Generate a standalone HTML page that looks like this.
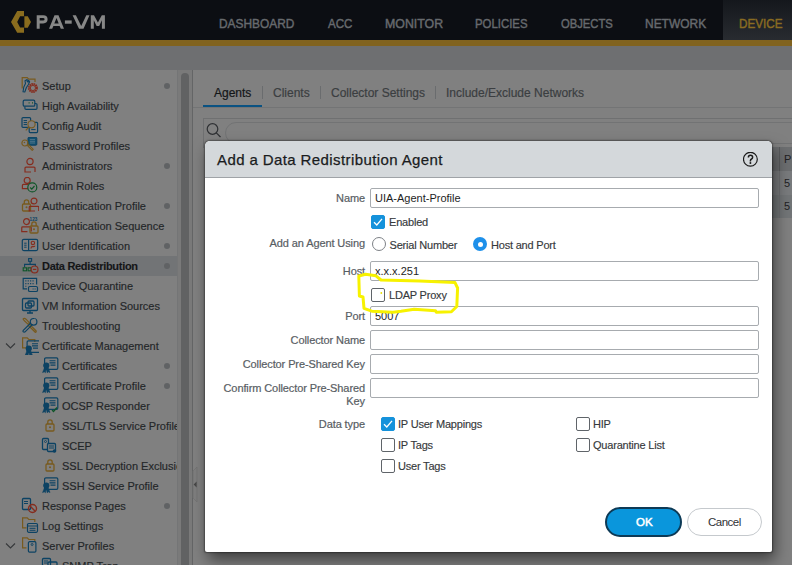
<!DOCTYPE html>
<html><head><meta charset="utf-8">
<style>
*{box-sizing:border-box;margin:0;padding:0}
html,body{width:792px;height:565px;overflow:hidden}
body{position:relative;background:#808080;font-family:"Liberation Sans",sans-serif;}
.a{position:absolute;white-space:nowrap}
#hdr{left:0;top:0;width:792px;height:40px;background:#0c0e13}
#dev{left:723px;top:0;width:69px;height:40px;background:linear-gradient(180deg,#14171c,#282b30)}
.nav{top:17px;font-size:13px;line-height:14px;color:#676a6e;-webkit-text-stroke:0.45px #676a6e;transform-origin:0 0}
#gold{left:0;top:40px;width:792px;height:6px;background:#81631f}
#gbar{left:0;top:46px;width:792px;height:24px;background:#6e6f71}
.si{left:42px;font-size:11px;line-height:13px;color:#232628;-webkit-text-stroke:0.15px #232628}
.dot{width:6px;height:6px;border-radius:3px;background:#606264;left:164px}
.ic{position:absolute}
.tab{top:86px;font-size:12px;line-height:14px;color:#3b3e41;-webkit-text-stroke:0.2px currentColor}
.sep{width:1px;height:13px;background:#6a6c6e;top:86px}
#dlg{left:205px;top:141px;width:567px;height:411px;background:#fff;border-radius:5px 5px 2px 2px;box-shadow:0 0 1.5px 0.5px rgba(0,0,0,0.35),3px 8px 15px 0 rgba(0,0,0,0.5)}
#dhd{left:0;top:0;width:567px;height:37px;background:#d4d8db;border-bottom:1px solid #9fa3a7;border-radius:5px 5px 0 0}
.lbl{font-size:11px;line-height:13px;color:#585d63;text-align:right;letter-spacing:-0.1px;-webkit-text-stroke:0.2px #585d63}
.inp{position:absolute;left:165px;width:389px;height:20px;border:1px solid #a7abaf;border-radius:2px;background:#fff}
.itx{font-size:11px;line-height:13px;color:#1e1e1e}
.cb{position:absolute;width:14px;height:14px;border:1px solid #5f6469;border-radius:2px;background:#fff}
.cbc{background:#1592db;border-color:#1592db}
.otx{font-size:11px;line-height:13px;color:#36393c;letter-spacing:-0.2px;-webkit-text-stroke:0.15px #36393c}
</style></head><body>
<!-- header -->
<div id="hdr" class="a"></div>
<div id="dev" class="a"></div>
<svg class="a" style="left:0;top:0" width="40" height="40" viewBox="0 0 40 40">
<path d="M17.2 11.1 H24 V16.2 H20.1 L17.2 21.9 L20.1 27.6 H24 V32.8 H17.2 L11 21.9 Z" fill="#8a6c1e"/>
<path d="M24.4 16.2 H27.8 L31 21.9 L27.8 27.7 H24.4 Z" fill="#8a6c1e"/>
</svg>
<svg class="a" style="left:0;top:0" width="120" height="40" viewBox="0 0 120 40"><g fill="#878787">
<path d="M36.7 28.8 V15.2 H43.2 Q47.6 15.2 47.6 19.3 Q47.6 23.4 43.2 23.4 H39.7 V28.8 Z M39.7 18 V20.6 H43 Q44.6 20.6 44.6 19.3 Q44.6 18 43 18 Z" fill-rule="evenodd"/>
<path d="M49 28.8 L54.5 15.2 H58.5 L64 28.8 H60.8 L59.6 25.9 H53.4 L52.2 28.8 Z M54.3 23.4 H58.7 L56.5 17.9 Z" fill-rule="evenodd"/>
<rect x="64.9" y="20.4" width="6.8" height="3.3"/>
<path d="M72.6 15.2 H75.9 L81.2 26 L86.3 15.2 H89.5 L83.5 28.8 H79 Z"/>
<path d="M90.8 28.8 V15.2 H94 L97.9 22.6 L101.8 15.2 H104.9 V28.8 H101.9 V20.3 L99.2 25.9 H96.6 L93.8 20.3 V28.8 Z"/>
</g></svg>
<div class="a nav" style="left:219px;transform:scaleX(0.915)">DASHBOARD</div>
<div class="a nav" style="left:328px;transform:scaleX(0.89)">ACC</div>
<div class="a nav" style="left:385px;transform:scaleX(0.95)">MONITOR</div>
<div class="a nav" style="left:475px;transform:scaleX(0.875)">POLICIES</div>
<div class="a nav" style="left:561px;transform:scaleX(0.865)">OBJECTS</div>
<div class="a nav" style="left:645px;transform:scaleX(0.92)">NETWORK</div>
<div class="a nav" style="left:739px;color:#8a6c22;-webkit-text-stroke:0.45px #8a6c22;transform:scaleX(0.9)">DEVICE</div>
<div id="gold" class="a"></div>
<div id="gbar" class="a"></div>

<!-- sidebar -->
<div class="a" style="left:0;top:256px;width:177px;height:20px;background:#727476"></div>
<div class="a" style="left:177px;top:70px;width:1px;height:495px;background:#747576"></div>
<div class="a" style="left:178px;top:70px;width:14px;height:495px;background:#7a7a7a"></div>
<div class="a" style="left:181px;top:73px;width:8px;height:500px;border-radius:4px;background:#616263"></div>
<div class="a" style="left:192px;top:70px;width:1px;height:495px;background:#646566"></div>
<svg class="a" style="left:190px;top:460px" width="10" height="50" viewBox="190 460 10 50"><path d="M193 471 L197 467 V502 L193 498 Z" fill="#7e7e7e" stroke="#727272" stroke-width="0.8"/><path d="M193.6 484.5 L196.6 481.5 V487.5 Z" fill="#474747"/></svg>

<!--SIDE-->
<div class="a" style="left:0;top:70px;width:177px;height:495px;overflow:hidden">
<div class="a si" style="left:42px;top:9.7px">Setup</div>
<svg class="a" style="left:21px;top:7px" width="18" height="18" viewBox="0 0 18 18"><path d="M1.2 11.5 V0.6 H6.2 L7.8 2.2 H14 V5" fill="none" stroke="#785a1e" stroke-width="1.2"/><path d="M2 14.8 L2.8 10 L4.5 6.5 L4 3.8 L6.2 2.6 L6.2 4.6 L7.2 4.9 L7.6 3.2 L8.6 4.8 L7.4 7.5 L5.4 10.5 L3.8 15 Z" fill="none" stroke="#0c4263" stroke-width="1.1" stroke-linejoin="round"/><circle cx="11.9" cy="11" r="3.9" fill="none" stroke="#852c1e" stroke-width="2.2" stroke-dasharray="1.5 0.55"/><circle cx="11.9" cy="11" r="2.6" fill="none" stroke="#852c1e" stroke-width="0.9"/></svg>
<div class="a dot" style="top:13px"></div>
<div class="a si" style="left:42px;top:29.7px">High Availability</div>
<svg class="a" style="left:21px;top:27px" width="18" height="18" viewBox="0 0 18 18"><rect x="2.2" y="3.2" width="11.6" height="6" rx="1.3" fill="none" stroke="#0c4263" stroke-width="1.2"/><path d="M3.9 9.4 V11.2 Q3.9 12.4 5.1 12.4 H14.8 Q16 12.4 16 11.2 V7.7 Q16 6.5 14.8 6.5 H13.8" fill="none" stroke="#0c4263" stroke-width="1.2"/><path d="M7.6 5.9 H8.6 M11 5.9 H12" stroke="#0e5528" stroke-width="1.3"/></svg>
<div class="a si" style="left:42px;top:49.7px">Config Audit</div>
<svg class="a" style="left:21px;top:47px" width="18" height="18" viewBox="0 0 18 18"><rect x="1" y="0.6" width="8.6" height="9.8" rx="1" fill="none" stroke="#0c4263" stroke-width="1.2"/><path d="M2.6 3.6 H6 M2.6 5.6 H6 M2.6 7.6 H6" fill="none" stroke="#0c4263" stroke-width="1"/><rect x="8.2" y="5.3" width="8.4" height="10.3" rx="1" fill="#808080" stroke="#0c4263" stroke-width="1.2"/><path d="M10.2 12.6 H14.6" fill="none" stroke="#0c4263" stroke-width="1"/><circle cx="10.5" cy="7.3" r="3.6" fill="#808080" stroke="#785a1e" stroke-width="1.1"/><path d="M7.9 10 L4.8 13.3" fill="none" stroke="#785a1e" stroke-width="1.1"/></svg>
<div class="a si" style="left:42px;top:69.7px">Password Profiles</div>
<svg class="a" style="left:21px;top:67px" width="18" height="18" viewBox="0 0 18 18"><rect x="7" y="0.3" width="8.8" height="7.9" rx="1" fill="#115070" stroke="#0c4263" stroke-width="1"/><path d="M8.8 2.6 H14 M8.8 4.3 H14 M8.8 6 H14" stroke="#5d7e90" stroke-width="0.8"/><circle cx="3.9" cy="6" r="3" fill="none" stroke="#785a1e" stroke-width="1.2"/><circle cx="3.4" cy="5.5" r="0.8" fill="#785a1e"/><path d="M6 8.2 L11.2 13.4 L12.3 12.4 L7.2 7.1" fill="none" stroke="#785a1e" stroke-width="1.1" stroke-linejoin="round"/></svg>
<div class="a si" style="left:42px;top:89.7px">Administrators</div>
<svg class="a" style="left:21px;top:87px" width="18" height="18" viewBox="0 0 18 18"><circle cx="9" cy="4.5" r="3.1" fill="none" stroke="#852c1e" stroke-width="1.2"/><path d="M10 15.0 H4 V11.0 Q4 10.1 5 10.1 H13 Q14 10.1 14 11.0 V15.0" fill="none" stroke="#852c1e" stroke-width="1.2"/></svg>
<div class="a dot" style="top:93px"></div>
<div class="a si" style="left:42px;top:109.7px">Admin Roles</div>
<svg class="a" style="left:21px;top:107px" width="18" height="18" viewBox="0 0 18 18"><circle cx="6.2" cy="3.4" r="3" fill="none" stroke="#852c1e" stroke-width="1.2"/><path d="M7 11.6 H1.4 V8.4 Q1.4 7.4 2.4 7.4 H7" fill="none" stroke="#852c1e" stroke-width="1.2"/><circle cx="11.3" cy="10.4" r="4.5" fill="#808080" stroke="#0e5528" stroke-width="1.2"/><path d="M9.2 10.5 L10.8 12.1 L13.5 9" fill="none" stroke="#0e5528" stroke-width="1.2"/></svg>
<div class="a si" style="left:42px;top:129.7px">Authentication Profile</div>
<svg class="a" style="left:21px;top:127px" width="18" height="18" viewBox="0 0 18 18"><rect x="1.5" y="7" width="8" height="7" rx="1" fill="none" stroke="#785a1e" stroke-width="1.3"/><path d="M3.3 7 V5 A2.2 2.2 0 0 1 7.7 5 V7" fill="none" stroke="#785a1e" stroke-width="1.3"/><circle cx="5.5" cy="10.3" r="1" fill="#785a1e"/><circle cx="13" cy="4" r="2.945" fill="none" stroke="#852c1e" stroke-width="1.2"/><path d="M13.95 13.975 H8.25 V10.175 Q8.25 9.32 9.2 9.32 H16.8 Q17.75 9.32 17.75 10.175 V13.975" fill="none" stroke="#852c1e" stroke-width="1.2"/></svg>
<div class="a dot" style="top:133px"></div>
<div class="a si" style="left:42px;top:149.7px">Authentication Sequence</div>
<svg class="a" style="left:21px;top:147px" width="18" height="18" viewBox="0 0 18 18"><circle cx="5.5" cy="4.6" r="2.945" fill="none" stroke="#852c1e" stroke-width="1.2"/><path d="M6.45 14.575 H0.75 V10.774999999999999 Q0.75 9.919999999999998 1.7000000000000002 9.919999999999998 H9.3 Q10.25 9.919999999999998 10.25 10.774999999999999 V14.575" fill="none" stroke="#852c1e" stroke-width="1.2"/><rect x="9" y="9" width="8" height="7" rx="1" fill="none" stroke="#785a1e" stroke-width="1.3"/><path d="M10.8 9 V7 A2.2 2.2 0 0 1 15.2 7 V9" fill="none" stroke="#785a1e" stroke-width="1.3"/><circle cx="13" cy="12.3" r="1" fill="#785a1e"/><text x="8.6" y="4" font-size="4.6" font-weight="bold" fill="#0c4263" font-family="Liberation Sans">123</text></svg>
<div class="a si" style="left:42px;top:169.7px">User Identification</div>
<svg class="a" style="left:21px;top:167px" width="18" height="18" viewBox="0 0 18 18"><rect x="1.3" y="2.3" width="15.4" height="11.3" rx="1.5" fill="none" stroke="#0c4263" stroke-width="1.2"/><path d="M7.6 2.3 V13.6" fill="none" stroke="#0c4263" stroke-width="1.2"/><path d="M3.2 6.2 H5.6 M3.2 8.2 H5.6 M3.2 10.2 H5.6" fill="none" stroke="#0c4263" stroke-width="1"/><circle cx="11.9" cy="5.9" r="1.7" fill="none" stroke="#852c1e" stroke-width="1.1"/><path d="M10 11.4 Q10 9.6 11.5 9.6 H12.6 Q14 9.6 13.6 8.8" fill="none" stroke="#852c1e" stroke-width="1.1"/></svg>
<div class="a dot" style="top:173px"></div>
<div class="a si" style="left:42px;top:189.7px;font-weight:bold;color:#141516;letter-spacing:-0.3px">Data Redistribution</div>
<svg class="a" style="left:21px;top:187px" width="18" height="18" viewBox="0 0 18 18"><rect x="7.6" y="1.6" width="3" height="2.7" fill="none" stroke="#0c4263" stroke-width="1.1"/><path d="M9.1 4.3 V7.3 M3.6 10 V7.4 H14.4 V9" fill="none" stroke="#0c4263" stroke-width="1.1"/><rect x="2.2" y="10.8" width="3.4" height="3" fill="none" stroke="#0e5528" stroke-width="1.1"/><rect x="7.1" y="10.8" width="3" height="3" fill="none" stroke="#0e5528" stroke-width="1.1"/><circle cx="13.6" cy="12.4" r="3.4" fill="#727476" stroke="#852c1e" stroke-width="1.2"/><path d="M11.9 12.4 H15.3" fill="none" stroke="#852c1e" stroke-width="1.2"/></svg>
<div class="a dot" style="top:193px"></div>
<div class="a si" style="left:42px;top:209.7px">Device Quarantine</div>
<svg class="a" style="left:21px;top:207px" width="18" height="18" viewBox="0 0 18 18"><path d="M6 11.8 H2.2 V1.4 H15.6 V7.5" fill="none" stroke="#0c4263" stroke-width="1.2"/><path d="M4.3 3.9 H13.8 M4.3 6.6 H13.8 M4.3 9.3 H6" stroke="#0c4263" stroke-width="1.1" stroke-dasharray="1.1 1.3"/><rect x="7.5" y="9.5" width="9" height="5" rx="1.3" fill="none" stroke="#0c4263" stroke-width="1.2"/><path d="M11.6 12 H14.6" stroke="#0c4263" stroke-width="1.1" stroke-dasharray="1 1"/></svg>
<div class="a si" style="left:42px;top:229.7px">VM Information Sources</div>
<svg class="a" style="left:21px;top:227px" width="18" height="18" viewBox="0 0 18 18"><rect x="1.5" y="1.5" width="15" height="12" rx="1" fill="none" stroke="#0c4263" stroke-width="1.3"/><path d="M9 13.5 V16 M6 16 H12" fill="none" stroke="#0c4263" stroke-width="1.3"/><rect x="4.5" y="6" width="6" height="5" rx="1" fill="none" stroke="#0c4263" stroke-width="1.3"/><rect x="7" y="4" width="6" height="5" rx="1" fill="none" stroke="#0c4263" stroke-width="1.3"/></svg>
<div class="a si" style="left:42px;top:249.7px">Troubleshooting</div>
<svg class="a" style="left:21px;top:247px" width="18" height="18" viewBox="0 0 18 18"><path d="M2.2 1.8 Q3.5 0.8 5 2.2 L8.6 6 L7.2 7.4 L3.4 3.8 Q1.8 2.6 2.2 1.8 Z M7.9 6.7 L15.2 14 Q15.5 15.3 14.3 15.3 L7.1 8.2" fill="none" stroke="#785a1e" stroke-width="1.2" stroke-linejoin="round"/><path d="M2 13.6 L10 5.8 M3.8 15.2 L11.6 7.4 M2 13.6 Q1.6 15.4 3.8 15.2" fill="none" stroke="#0c4263" stroke-width="1.2"/><circle cx="12.6" cy="4.8" r="3.3" fill="none" stroke="#0c4263" stroke-width="1.2"/><path d="M13 3.4 L14.2 2" stroke="#808080" stroke-width="1.6"/></svg>
<div class="a si" style="left:42px;top:269.7px">Certificate Management</div>
<svg class="a" style="left:21px;top:267px" width="18" height="18" viewBox="0 0 18 18"><path d="M5.5 10.8 H1.6 V0.9 H6.2 L7.8 2.5 H13.8 V5" fill="none" stroke="#785a1e" stroke-width="1.2"/><rect x="6.1" y="3.8" width="13.2" height="11.6" rx="1.3" fill="none" stroke="#0c4263" stroke-width="1.2"/><path d="M11.0 6.7 H17.0 M11.0 8.9 H17.0 M12.0 11.1 H17.0" fill="none" stroke="#0c4263" stroke-width="1.1"/><circle cx="7.8" cy="11.5" r="3.1" fill="#0c4263"/><path d="M6.1 13.5 L4.1 18.5 L5.8 17.8 L6.9 18.8 L7.8 14.5 L8.7 18.8 L9.8 17.8 L11.5 18.5 L9.5 13.5" fill="#0c4263" stroke="#0c4263" stroke-width="0.6"/></svg>
<svg class="a" style="left:5px;top:272px" width="12" height="8" viewBox="0 0 12 8"><path d="M1 1.5 L5.5 6 L10 1.5" fill="none" stroke="#36383a" stroke-width="1.1"/></svg>
<div class="a si" style="left:62px;top:289.7px">Certificates</div>
<svg class="a" style="left:41px;top:287px" width="18" height="18" viewBox="0 0 18 18"><rect x="3.6" y="0.8" width="13.2" height="11.6" rx="1.3" fill="none" stroke="#0c4263" stroke-width="1.2"/><path d="M8.5 3.7 H14.5 M8.5 5.9 H14.5 M9.5 8.1 H14.5" fill="none" stroke="#0c4263" stroke-width="1.1"/><circle cx="5.3" cy="8.5" r="3.1" fill="#0c4263"/><path d="M3.6 10.5 L1.6 15.5 L3.3 14.8 L4.4 15.8 L5.3 11.5 L6.2 15.8 L7.3 14.8 L9 15.5 L7 10.5" fill="#0c4263" stroke="#0c4263" stroke-width="0.6"/></svg>
<div class="a dot" style="top:293px"></div>
<div class="a si" style="left:62px;top:309.7px">Certificate Profile</div>
<svg class="a" style="left:41px;top:307px" width="18" height="18" viewBox="0 0 18 18"><rect x="3.6" y="0.8" width="13.2" height="11.6" rx="1.3" fill="none" stroke="#0c4263" stroke-width="1.2"/><path d="M8.5 3.7 H14.5 M8.5 5.9 H14.5 M9.5 8.1 H14.5" fill="none" stroke="#0c4263" stroke-width="1.1"/><circle cx="5.3" cy="8.5" r="3.1" fill="#0c4263"/><path d="M3.6 10.5 L1.6 15.5 L3.3 14.8 L4.4 15.8 L5.3 11.5 L6.2 15.8 L7.3 14.8 L9 15.5 L7 10.5" fill="#0c4263" stroke="#0c4263" stroke-width="0.6"/></svg>
<div class="a dot" style="top:313px"></div>
<div class="a si" style="left:62px;top:329.7px">OCSP Responder</div>
<svg class="a" style="left:41px;top:327px" width="18" height="18" viewBox="0 0 18 18"><rect x="3.6" y="0.8" width="13.2" height="11.6" rx="1.3" fill="none" stroke="#0c4263" stroke-width="1.2"/><path d="M8.5 3.7 H14.5 M8.5 5.9 H14.5 M9.5 8.1 H14.5" fill="none" stroke="#0c4263" stroke-width="1.1"/><circle cx="5.3" cy="8.5" r="3.1" fill="#0c4263"/><path d="M3.6 10.5 L1.6 15.5 L3.3 14.8 L4.4 15.8 L5.3 11.5 L6.2 15.8 L7.3 14.8 L9 15.5 L7 10.5" fill="#0c4263" stroke="#0c4263" stroke-width="0.6"/><path d="M11 13 L12.5 14.5 L16 10.5" fill="none" stroke="#0e5528" stroke-width="1.3"/></svg>
<div class="a si" style="left:62px;top:349.7px">SSL/TLS Service Profile</div>
<svg class="a" style="left:41px;top:347px" width="18" height="18" viewBox="0 0 18 18"><rect x="5" y="7" width="8" height="7" rx="1" fill="none" stroke="#785a1e" stroke-width="1.3"/><path d="M6.8 7 V5 A2.2 2.2 0 0 1 11.2 5 V7" fill="none" stroke="#785a1e" stroke-width="1.3"/><circle cx="9" cy="10.3" r="1" fill="#785a1e"/></svg>
<div class="a si" style="left:62px;top:369.7px">SCEP</div>
<svg class="a" style="left:41px;top:367px" width="18" height="18" viewBox="0 0 18 18"><rect x="1.5" y="1.5" width="6" height="11" rx="1" fill="none" stroke="#0c4263" stroke-width="1.3"/><circle cx="4.5" cy="4.5" r="1" fill="none" stroke="#0c4263" stroke-width="0.9"/><rect x="6.5" y="6.5" width="8" height="8" rx="1" fill="#808080" stroke="#0c4263" stroke-width="1.3"/><path d="M8 9 H13 M8 11 H13" fill="none" stroke="#0c4263" stroke-width="1"/><circle cx="13.5" cy="14" r="1.8" fill="#0c4263"/></svg>
<div class="a si" style="left:62px;top:389.7px">SSL Decryption Exclusion</div>
<svg class="a" style="left:41px;top:387px" width="18" height="18" viewBox="0 0 18 18"><rect x="5" y="7" width="8" height="7" rx="1" fill="none" stroke="#785a1e" stroke-width="1.3"/><path d="M6.8 7 V5 A2.2 2.2 0 0 1 11.2 5 V7" fill="none" stroke="#785a1e" stroke-width="1.3"/><circle cx="9" cy="10.3" r="1" fill="#785a1e"/></svg>
<div class="a si" style="left:62px;top:409.7px">SSH Service Profile</div>
<svg class="a" style="left:41px;top:407px" width="18" height="18" viewBox="0 0 18 18"><rect x="3.6" y="0.8" width="13.2" height="11.6" rx="1.3" fill="none" stroke="#0c4263" stroke-width="1.2"/><path d="M8.5 3.7 H14.5 M8.5 5.9 H14.5 M9.5 8.1 H14.5" fill="none" stroke="#0c4263" stroke-width="1.1"/><circle cx="5.3" cy="8.5" r="3.1" fill="#0c4263"/><path d="M3.6 10.5 L1.6 15.5 L3.3 14.8 L4.4 15.8 L5.3 11.5 L6.2 15.8 L7.3 14.8 L9 15.5 L7 10.5" fill="#0c4263" stroke="#0c4263" stroke-width="0.6"/></svg>
<div class="a si" style="left:42px;top:429.7px">Response Pages</div>
<svg class="a" style="left:21px;top:427px" width="18" height="18" viewBox="0 0 18 18"><rect x="1.5" y="1.5" width="8" height="11" rx="1" fill="none" stroke="#0c4263" stroke-width="1.3"/><path d="M3 4.5 H7 M3 6.5 H7" fill="none" stroke="#0c4263" stroke-width="1"/><circle cx="11.5" cy="11.5" r="4" fill="none" stroke="#852c1e" stroke-width="1.4"/><path d="M8.8 8.8 L14.2 14.2" fill="none" stroke="#852c1e" stroke-width="1.4"/></svg>
<div class="a dot" style="top:433px"></div>
<div class="a si" style="left:42px;top:449.7px">Log Settings</div>
<svg class="a" style="left:21px;top:447px" width="18" height="18" viewBox="0 0 18 18"><path d="M5.5 10.8 H1.6 V0.9 H6.2 L7.8 2.5 H13.8 V5" fill="none" stroke="#785a1e" stroke-width="1.2"/><rect x="6.5" y="6.5" width="10" height="8.8" rx="1.2" fill="#808080" stroke="#0c4263" stroke-width="1.2"/><path d="M6.5 9 H16.5 M8.5 11.3 H14.5 M8.5 13.3 H14.5" fill="none" stroke="#0c4263" stroke-width="1"/></svg>
<div class="a si" style="left:42px;top:469.7px">Server Profiles</div>
<svg class="a" style="left:21px;top:467px" width="18" height="18" viewBox="0 0 18 18"><path d="M5.5 10.8 H1.6 V0.9 H6.2 L7.8 2.5 H13.8 V5" fill="none" stroke="#785a1e" stroke-width="1.2"/><rect x="7.4" y="4.7" width="7.5" height="10.5" rx="1.2" fill="#808080" stroke="#0c4263" stroke-width="1.2"/><circle cx="11.1" cy="7.5" r="1" fill="none" stroke="#0c4263" stroke-width="0.9"/></svg>
<svg class="a" style="left:5px;top:472px" width="12" height="8" viewBox="0 0 12 8"><path d="M1 1.5 L5.5 6 L10 1.5" fill="none" stroke="#36383a" stroke-width="1.1"/></svg>
<div class="a si" style="left:62px;top:489.7px">SNMP Trap</div>
<svg class="a" style="left:41px;top:487px" width="18" height="18" viewBox="0 0 18 18"><rect x="1.5" y="1.5" width="8" height="10" rx="1" fill="none" stroke="#0c4263" stroke-width="1.3"/><path d="M3 4 H7 M3 6 H7" fill="none" stroke="#0c4263" stroke-width="1"/><rect x="7" y="5" width="9" height="10" rx="1" fill="none" stroke="#0c4263" stroke-width="1.3"/></svg>
</div>
<!--/SIDE-->

<!-- content behind -->
<div class="a tab" style="left:214px;color:#141618">Agents</div>
<div class="a sep" style="left:262px"></div>
<div class="a tab" style="left:273px">Clients</div>
<div class="a sep" style="left:320px"></div>
<div class="a tab" style="left:331px">Collector Settings</div>
<div class="a sep" style="left:435px"></div>
<div class="a tab" style="left:446px">Include/Exclude Networks</div>
<div class="a" style="left:203px;top:105px;width:59px;height:2px;background:#0a5282"></div>
<div class="a" style="left:193px;top:107px;width:599px;height:1px;background:#737475"></div>
<div class="a" style="left:203px;top:118px;width:589px;height:30px;border-top:1px solid #6f7071;border-left:1px solid #6f7071"></div>
<svg class="a" style="left:206px;top:122px" width="16" height="16" viewBox="0 0 16 16"><circle cx="6.5" cy="7" r="5.3" fill="none" stroke="#2e3033" stroke-width="1.2"/><path d="M10.3 10.8 L14.5 15" stroke="#2e3033" stroke-width="1.2"/></svg>
<div class="a" style="left:225px;top:122px;width:600px;height:22px;border:1px solid #727374;border-radius:11px"></div>
<div class="a" style="left:772px;top:147px;width:20px;height:24px;background:#6c6e70"></div>
<div class="a" style="left:779px;top:147px;width:1px;height:24px;background:#5a5c5e"></div>
<div class="a" style="left:784px;top:153px;font-size:11px;line-height:13px;color:#1f2123">P</div>
<div class="a" style="left:772px;top:171px;width:20px;height:24px;background:#797b7d"></div>
<div class="a" style="left:772px;top:195px;width:20px;height:23px;background:#727577"></div>
<div class="a" style="left:779px;top:171px;width:1px;height:47px;background:#6d6f71"></div>
<div class="a" style="left:784px;top:177px;font-size:11px;line-height:13px;color:#1f2123">5</div>
<div class="a" style="left:784px;top:200px;font-size:11px;line-height:13px;color:#1f2123">5</div>

<!-- dialog -->
<div id="dlg" class="a">
  <div id="dhd" class="a"></div>
  <div class="a" style="left:12px;top:10px;font-size:15px;line-height:17px;color:#1a1c1e;letter-spacing:0.4px;-webkit-text-stroke:0.25px #1a1c1e">Add a Data Redistribution Agent</div>
  <svg class="a" style="left:538px;top:11px" width="16" height="16" viewBox="0 0 16 16"><circle cx="7.4" cy="7.2" r="6.9" fill="none" stroke="#1a1a1a" stroke-width="1.2"/><path d="M5.4 5.4 Q5.4 3.3 7.5 3.3 Q9.6 3.3 9.6 5.2 Q9.6 6.4 8.5 7 Q7.4 7.6 7.4 8.8 V9.4" fill="none" stroke="#1a1a1a" stroke-width="1.5"/><circle cx="7.4" cy="11" r="0.95" fill="#1a1a1a"/></svg>

  <div class="a lbl" style="right:407px;top:51px">Name</div>
  <div class="inp" style="top:47px"></div>
  <div class="a itx" style="left:170px;top:51px">UIA-Agent-Profile</div>

  <div class="cb cbc" style="left:166px;top:74px"></div>
  <svg class="a" style="left:166px;top:74px" width="14" height="14" viewBox="0 0 14 14"><path d="M3 7.2 L5.8 10 L11 3.8" fill="none" stroke="#fff" stroke-width="1.3"/></svg>
  <div class="a otx" style="left:184px;top:75px">Enabled</div>

  <div class="a lbl" style="right:407px;top:96px">Add an Agent Using</div>
  <div class="a" style="left:167px;top:96px;width:14px;height:14px;border-radius:7px;border:1px solid #7d8186"></div>
  <div class="a otx" style="left:184.5px;top:97.5px">Serial Number</div>
  <div class="a" style="left:268px;top:96px;width:14px;height:14px;border-radius:7px;background:#1e90ea"></div>
  <div class="a" style="left:272.5px;top:100.5px;width:5px;height:5px;border-radius:3px;background:#fff"></div>
  <div class="a otx" style="left:286px;top:98px">Host and Port</div>

  <div class="a lbl" style="right:407px;top:124px">Host</div>
  <div class="inp" style="top:120px"></div>
  <div class="a itx" style="left:170px;top:124px">x.x.x.251</div>

  <div class="cb" style="left:166px;top:147px"></div>
  <div class="a otx" style="left:184px;top:147.5px">LDAP Proxy</div>

  <div class="a lbl" style="right:407px;top:169px">Port</div>
  <div class="inp" style="top:165px"></div>
  <div class="a itx" style="left:170px;top:169px">5007</div>

  <div class="a lbl" style="right:407px;top:193px">Collector Name</div>
  <div class="inp" style="top:189px"></div>
  <div class="a lbl" style="right:407px;top:217px">Collector Pre-Shared Key</div>
  <div class="inp" style="top:213px"></div>
  <div class="a lbl" style="right:407px;top:241px;line-height:13px">Confirm Collector Pre-Shared<br>Key</div>
  <div class="inp" style="top:237px"></div>

  <div class="a lbl" style="right:407px;top:277px">Data type</div>
  <div class="cb cbc" style="left:176px;top:276px"></div>
  <svg class="a" style="left:176px;top:276px" width="14" height="14" viewBox="0 0 14 14"><path d="M3 7.2 L5.8 10 L11 3.8" fill="none" stroke="#fff" stroke-width="1.3"/></svg>
  <div class="a otx" style="left:193px;top:277px">IP User Mappings</div>
  <div class="cb" style="left:176px;top:297px"></div>
  <div class="a otx" style="left:193px;top:298px">IP Tags</div>
  <div class="cb" style="left:176px;top:318px"></div>
  <div class="a otx" style="left:193px;top:319px">User Tags</div>
  <div class="cb" style="left:371px;top:276px"></div>
  <div class="a otx" style="left:388px;top:277px">HIP</div>
  <div class="cb" style="left:371px;top:297px"></div>
  <div class="a otx" style="left:388px;top:298px">Quarantine List</div>

  <div class="a" style="left:400px;top:366px;width:77px;height:30px;border-radius:15px;background:#0a96dc;border:2px solid #0d3a56"></div>
  <div class="a" style="left:431px;top:374px;font-size:11.5px;line-height:14px;color:#fff;-webkit-text-stroke:0.5px #fff">OK</div>
  <div class="a" style="left:482px;top:367px;width:75px;height:28px;border-radius:14px;background:#fff;border:1px solid #c5c9cd"></div>
  <div class="a" style="left:503px;top:374px;font-size:11.5px;line-height:14px;color:#2f3235;letter-spacing:-0.5px">Cancel</div>
</div>

<!-- annotation -->
<svg class="a" style="left:0;top:0" width="792" height="565" viewBox="0 0 792 565">
<path d="M358.8 276 L365.5 274.2 L376 275.8 L381 280 L419.5 281 L455 282.6 L457.6 288 L456.8 306.5 L451.4 311.8 L436.3 312.2 L435.5 310.8 L414.2 309.2 L401 311.2 L393 312.2 L371.8 311.2 L364 308.3 L363 297 L359.4 296 Z" fill="none" stroke="#f7f200" stroke-width="3" stroke-linejoin="round"/>
<circle cx="381.3" cy="293" r="0.9" fill="#e8e000"/>
</svg>
</body></html>
